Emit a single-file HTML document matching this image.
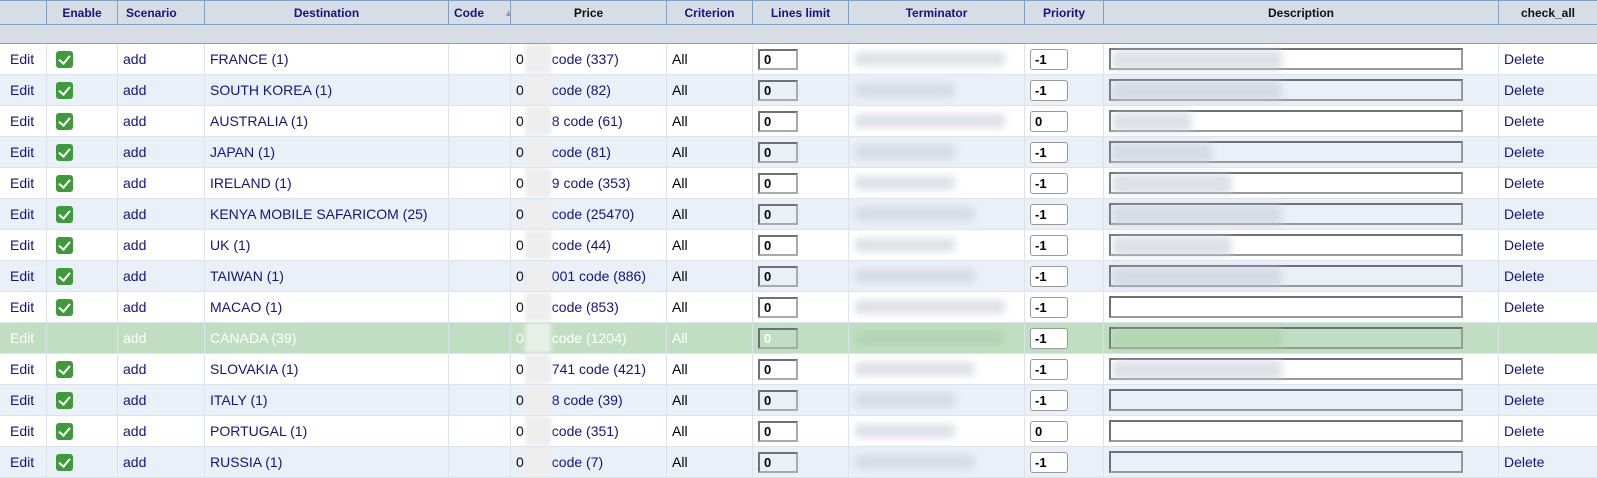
<!DOCTYPE html>
<html><head><meta charset="utf-8"><style>
*{box-sizing:border-box;margin:0;padding:0}
body{width:1597px;height:478px;overflow:hidden;background:#fff;font-family:"Liberation Sans",Arial,sans-serif;font-size:14px;color:#141480}
.row{display:grid;grid-template-columns:46px 71px 87px 244px 62px 156px 86px 96px 176px 79px 395px 99px;width:1597px}
.row>div{position:relative;white-space:nowrap;overflow:hidden;border-left:1px solid #dde3ea;padding-left:5px;display:flex;align-items:center}
.row>div:first-child{border-left:0;padding-left:10px}
.h{height:25px;background:#d6dde5;border-top:1px solid #7f9fc4;border-bottom:1px solid #7f9fc4}
.h>div{border-left:1px solid #7f9fc4 !important;justify-content:center;font-weight:bold;font-size:12px;padding:0 !important}
.h>div:first-child{border-left:0 !important}
.h .k{color:#111}
.f{height:19px;background:#d6dde5;border-bottom:1px solid #7f9fc4}
.r{height:31px;border-bottom:1px solid #dde3ea}
.a{background:#eaf0f8}
.g{background:#c0dfc2;color:#fff}
.ck{display:inline-block;width:17px;height:17px;background:#3e9a3a;border-radius:3px;position:relative;margin-left:4px}
.ck:after{content:"";position:absolute;left:5px;top:2px;width:5px;height:9px;border:solid #fff;border-width:0 2.5px 2.5px 0;transform:rotate(40deg)}
.ll{display:inline-block;width:40px;height:21px;border:2px solid #6f6f77;border-right-color:#aaa;border-bottom-color:#aaa;font-weight:bold;font-size:13px;color:#000;padding-left:4px;line-height:17px}
.w .ll{background:#fff}
.pr{display:inline-block;width:38px;height:21px;border:1px solid #999;border-radius:3px;background:#fff;font-weight:bold;font-size:13px;color:#000;padding-left:4px;line-height:19px}
.ds{display:inline-block;width:354px;height:22px;border:2px solid #6f6f77;border-right-color:#999;border-bottom-color:#999}
.w .ds{background:#fff}
.bl{position:absolute;filter:blur(4px);background:#c8ccd8;border-radius:4px;opacity:.6}
.pb{display:inline-block;width:26px;height:30px;background:#eee;margin:0 1px;filter:blur(2px)}
.blk{color:#000}
.g .blk{color:#fff}
</style></head><body>
<div class="row h"><div></div><div>Enable</div><div style="justify-content:flex-start;padding-left:8px!important">Scenario</div><div>Destination</div><div style="justify-content:flex-start;padding-left:5px!important">Code <span style="color:#999;font-size:9px;margin-left:20px">▲</span></div><div class="k">Price</div><div>Criterion</div><div>Lines limit</div><div>Terminator</div><div>Priority</div><div class="k">Description</div><div class="k">check_all</div></div>
<div class="f"></div>

<div class="row r w"><div>Edit</div><div><span class="ck"></span></div><div>add</div><div>FRANCE (1)</div><div></div><div><span class="blk">0</span><span class="pb"></span>code (337)</div><div class="blk">All</div><div><span class="ll">0</span></div><div><div class="bl" style="left:6px;top:8px;width:150px;height:14px"></div></div><div><span class="pr">-1</span></div><div><span class="ds"></span><div class="bl" style="left:8px;top:6px;width:170px;height:20px"></div></div><div>Delete</div></div>
<div class="row r a"><div>Edit</div><div><span class="ck"></span></div><div>add</div><div>SOUTH KOREA (1)</div><div></div><div><span class="blk">0</span><span class="pb"></span>code (82)</div><div class="blk">All</div><div><span class="ll">0</span></div><div><div class="bl" style="left:6px;top:8px;width:100px;height:14px"></div></div><div><span class="pr">-1</span></div><div><span class="ds"></span><div class="bl" style="left:8px;top:6px;width:170px;height:20px"></div></div><div>Delete</div></div>
<div class="row r w"><div>Edit</div><div><span class="ck"></span></div><div>add</div><div>AUSTRALIA (1)</div><div></div><div><span class="blk">0</span><span class="pb"></span>8 code (61)</div><div class="blk">All</div><div><span class="ll">0</span></div><div><div class="bl" style="left:6px;top:8px;width:150px;height:14px"></div></div><div><span class="pr">0</span></div><div><span class="ds"></span><div class="bl" style="left:8px;top:6px;width:80px;height:20px"></div></div><div>Delete</div></div>
<div class="row r a"><div>Edit</div><div><span class="ck"></span></div><div>add</div><div>JAPAN (1)</div><div></div><div><span class="blk">0</span><span class="pb"></span>code (81)</div><div class="blk">All</div><div><span class="ll">0</span></div><div><div class="bl" style="left:6px;top:8px;width:100px;height:14px"></div></div><div><span class="pr">-1</span></div><div><span class="ds"></span><div class="bl" style="left:8px;top:6px;width:100px;height:20px"></div></div><div>Delete</div></div>
<div class="row r w"><div>Edit</div><div><span class="ck"></span></div><div>add</div><div>IRELAND (1)</div><div></div><div><span class="blk">0</span><span class="pb"></span>9 code (353)</div><div class="blk">All</div><div><span class="ll">0</span></div><div><div class="bl" style="left:6px;top:8px;width:100px;height:14px"></div></div><div><span class="pr">-1</span></div><div><span class="ds"></span><div class="bl" style="left:8px;top:6px;width:120px;height:20px"></div></div><div>Delete</div></div>
<div class="row r a"><div>Edit</div><div><span class="ck"></span></div><div>add</div><div>KENYA MOBILE SAFARICOM (25)</div><div></div><div><span class="blk">0</span><span class="pb"></span>code (25470)</div><div class="blk">All</div><div><span class="ll">0</span></div><div><div class="bl" style="left:6px;top:8px;width:120px;height:14px"></div></div><div><span class="pr">-1</span></div><div><span class="ds"></span><div class="bl" style="left:8px;top:6px;width:170px;height:20px"></div></div><div>Delete</div></div>
<div class="row r w"><div>Edit</div><div><span class="ck"></span></div><div>add</div><div>UK (1)</div><div></div><div><span class="blk">0</span><span class="pb"></span>code (44)</div><div class="blk">All</div><div><span class="ll">0</span></div><div><div class="bl" style="left:6px;top:8px;width:100px;height:14px"></div></div><div><span class="pr">-1</span></div><div><span class="ds"></span><div class="bl" style="left:8px;top:6px;width:120px;height:20px"></div></div><div>Delete</div></div>
<div class="row r a"><div>Edit</div><div><span class="ck"></span></div><div>add</div><div>TAIWAN (1)</div><div></div><div><span class="blk">0</span><span class="pb"></span>001 code (886)</div><div class="blk">All</div><div><span class="ll">0</span></div><div><div class="bl" style="left:6px;top:8px;width:120px;height:14px"></div></div><div><span class="pr">-1</span></div><div><span class="ds"></span><div class="bl" style="left:8px;top:6px;width:170px;height:20px"></div></div><div>Delete</div></div>
<div class="row r w"><div>Edit</div><div><span class="ck"></span></div><div>add</div><div>MACAO (1)</div><div></div><div><span class="blk">0</span><span class="pb"></span>code (853)</div><div class="blk">All</div><div><span class="ll">0</span></div><div><div class="bl" style="left:6px;top:8px;width:150px;height:14px"></div></div><div><span class="pr">-1</span></div><div><span class="ds"></span></div><div>Delete</div></div>
<div class="row r g"><div>Edit</div><div></div><div>add</div><div>CANADA (39)</div><div></div><div><span class="blk">0</span><span class="pb" style="background:#e8efe8"></span>code (1204)</div><div>All</div><div><span class="ll" style="color:#fff">0</span></div><div><div class="bl" style="left:6px;top:8px;width:150px;height:14px;background:#a8cfa8"></div></div><div><span class="pr">-1</span></div><div><span class="ds"></span><div class="bl" style="left:8px;top:6px;width:170px;height:20px;background:#a8cfa8"></div></div><div></div></div>
<div class="row r w"><div>Edit</div><div><span class="ck"></span></div><div>add</div><div>SLOVAKIA (1)</div><div></div><div><span class="blk">0</span><span class="pb"></span>741 code (421)</div><div class="blk">All</div><div><span class="ll">0</span></div><div><div class="bl" style="left:6px;top:8px;width:120px;height:14px"></div></div><div><span class="pr">-1</span></div><div><span class="ds"></span><div class="bl" style="left:8px;top:6px;width:170px;height:20px"></div></div><div>Delete</div></div>
<div class="row r a"><div>Edit</div><div><span class="ck"></span></div><div>add</div><div>ITALY (1)</div><div></div><div><span class="blk">0</span><span class="pb"></span>8 code (39)</div><div class="blk">All</div><div><span class="ll">0</span></div><div><div class="bl" style="left:6px;top:8px;width:100px;height:14px"></div></div><div><span class="pr">-1</span></div><div><span class="ds"></span></div><div>Delete</div></div>
<div class="row r w"><div>Edit</div><div><span class="ck"></span></div><div>add</div><div>PORTUGAL (1)</div><div></div><div><span class="blk">0</span><span class="pb"></span>code (351)</div><div class="blk">All</div><div><span class="ll">0</span></div><div><div class="bl" style="left:6px;top:8px;width:100px;height:14px"></div></div><div><span class="pr">0</span></div><div><span class="ds"></span></div><div>Delete</div></div>
<div class="row r a"><div>Edit</div><div><span class="ck"></span></div><div>add</div><div>RUSSIA (1)</div><div></div><div><span class="blk">0</span><span class="pb"></span>code (7)</div><div class="blk">All</div><div><span class="ll">0</span></div><div><div class="bl" style="left:6px;top:8px;width:120px;height:14px"></div></div><div><span class="pr">-1</span></div><div><span class="ds"></span></div><div>Delete</div></div>
</body></html>
